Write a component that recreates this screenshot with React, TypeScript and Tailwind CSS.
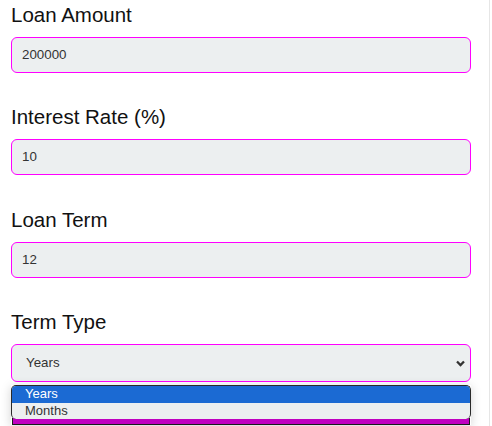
import { ReactNode } from 'react';

function Field({ label, children }: { label: string; children: ReactNode }) {
  return (
    <div className="mb-[30.4px]">
      <label className="block text-[20.5px] leading-[28px] text-[#111] mb-[8px]">{label}</label>
      {children}
    </div>
  );
}

function TextBox({ value }: { value: string }) {
  return (
    <div className="h-[36px] flex items-center pl-[10px] rounded-[6px] border border-[#ff00ff] bg-[#eceff0] text-[13.33px] text-[#333]">
      {value}
    </div>
  );
}

export default function App() {
  return (
    <div className="w-[490px] h-[426px] overflow-hidden border-r border-[#e6e6e6] bg-white pl-[11px] pr-[18px] pt-[1px] font-['Liberation_Sans',Arial,sans-serif]">
      <Field label="Loan Amount">
        <TextBox value="200000" />
      </Field>
      <Field label="Interest Rate (%)">
        <TextBox value="10" />
      </Field>
      <Field label="Loan Term">
        <TextBox value="12" />
      </Field>
      <div>
        <label className="block text-[20.5px] leading-[28px] text-[#111] mb-[8px]">Term Type</label>
        <div className="relative">
          {/* select, shown open */}
          <div className="h-[38px] flex items-center justify-between pl-[14px] pr-[5px] rounded-[6px] border border-[#ff00ff] bg-[#eceff0] text-[13.33px] text-[#333]">
            <span>Years</span>
            <svg width="9" height="7" viewBox="0 0 9 7">
              <path d="M1 1.5 L4.5 5 L8 1.5" fill="none" stroke="#333" strokeWidth="2.3" />
            </svg>
          </div>
          {/* native option popup */}
          <div className="absolute left-0 right-0 top-[41px] shadow-[0_2px_10px_rgba(0,0,0,0.18)]">
            <div className="rounded-[5px] overflow-hidden border-x border-t border-[#2a2a2a] bg-[#eceff0] text-[13px] leading-[16.5px] relative z-10">
              <div className="bg-[#1b6ad3] text-white pl-[13px]">Years</div>
              <div className="text-[#333] pl-[13px] rounded-b-[5px]">Months</div>
            </div>
            <div className="h-[7px] -mt-[1px] bg-[#c000c0] border-x border-b border-[#1a1a1a] mx-[1px]" />
          </div>
        </div>
      </div>
    </div>
  );
}
